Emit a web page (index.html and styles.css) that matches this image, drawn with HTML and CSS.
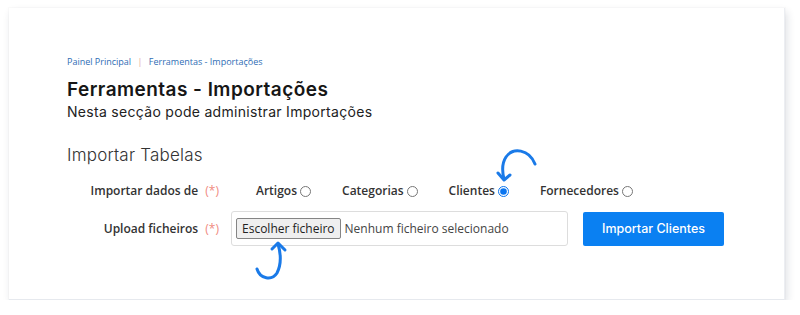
FILE: index.html
```html
<!DOCTYPE html>
<html lang="pt">
<head>
    <meta charset="UTF-8">
    <meta name="viewport" content="width=device-width, initial-scale=1.0">
    <title>Ferramentas - Importações</title>
    <link rel="stylesheet" href="styles.css">
</head>
<body>
    <div class="card">
        <!-- Breadcrumb -->
        <div class="breadcrumb">
            <a href="#">Painel Principal</a>
            <span class="sep">|</span>
            <a href="#">Ferramentas - Importações</a>
        </div>

        <h1>Ferramentas - Importações</h1>
        <p class="subtitle">Nesta secção pode administrar Importações</p>

        <h2>Importar Tabelas</h2>

        <div class="form-row">
            <label class="form-label">Importar dados de <span class="req">(*)</span></label>
            <div class="options">
                <label class="option">Artigos <input type="radio" name="tabela"></label>
                <label class="option">Categorias <input type="radio" name="tabela"></label>
                <label class="option">Clientes <input type="radio" name="tabela" checked></label>
                <label class="option">Fornecedores <input type="radio" name="tabela"></label>
            </div>
        </div>

        <div class="form-row">
            <label class="form-label">Upload ficheiros <span class="req">(*)</span></label>
            <div class="file-box">
                <button class="file-btn">Escolher ficheiro</button>
                <span class="file-name">Nenhum ficheiro selecionado</span>
            </div>
            <button class="btn-primary">Importar Clientes</button>
        </div>

        <!-- Annotation arrows -->
        <svg class="arrow arrow-radio" width="50" height="50" viewBox="0 0 50 50">
            <path d="M44 23 C38 8 22 6 15 16 C11 22 11 30 13 38" fill="none" stroke="#1a7ae8" stroke-width="3" stroke-linecap="round"/>
            <path d="M7 32 L13 39 L19 34" fill="none" stroke="#1a7ae8" stroke-width="3" stroke-linecap="round" stroke-linejoin="round"/>
        </svg>
        <svg class="arrow arrow-file" width="50" height="48" viewBox="0 0 50 48">
            <path d="M8 32 C11 42 23 44 28 36 C32 28 32 17 29 7" fill="none" stroke="#1a7ae8" stroke-width="3" stroke-linecap="round"/>
            <path d="M23 12 L29 6 L36 13" fill="none" stroke="#1a7ae8" stroke-width="3" stroke-linecap="round" stroke-linejoin="round"/>
        </svg>
    </div>
</body>
</html>
```

FILE: styles.css
```css
body {
    margin: 0;
    background: #fff;
    font-family: "Open Sans", Arial, sans-serif;
    color: #333;
}
.card {
    position: relative;
    margin: 8px 0 0 9px;
    width: 776px;
    height: 292px;
    box-sizing: border-box;
    padding: 47px 58px 0;
    background: #fff;
    border-right: 1px solid #eceef2;
    border-bottom: 1px solid #e6e9ee;
    box-shadow: 0 0 0 1px rgba(30, 45, 70, 0.02), 2px 4px 8px rgba(30, 45, 70, 0.14);
}
.breadcrumb {
    font-size: 9px;
    line-height: 14px;
}
.breadcrumb a {
    color: #2f6db5;
    text-decoration: none;
}
.breadcrumb .sep {
    color: #e3a3a3;
    margin: 0 4px;
}
h1 {
    margin: 9px 0 0;
    font-family: Inter, sans-serif;
    font-size: 19px;
    font-weight: 600;
    letter-spacing: 0.45px;
    line-height: 24px;
    color: #161616;
}
.subtitle {
    margin: 0;
    font-family: Inter, sans-serif;
    font-size: 14px;
    letter-spacing: 0.3px;
    line-height: 20px;
    color: #222;
}
h2 {
    margin: 21px 0 0;
    font-family: Inter, sans-serif;
    font-size: 17px;
    font-weight: 300;
    letter-spacing: 0.2px;
    line-height: 24px;
    color: #333;
}
.form-row {
    display: flex;
    align-items: center;
    margin-top: 15px;
}
.form-row + .form-row {
    margin-top: 12px;
}
.form-label {
    width: 152px;
    text-align: right;
    font-size: 12px;
    font-weight: 600;
    color: #333;
}
.req {
    color: #f08a80;
    font-weight: 400;
    margin-left: 4px;
}
.options {
    display: flex;
    gap: 31px;
    margin-left: 37px;
    font-size: 12px;
    font-weight: 600;
    color: #333;
}
.option {
    display: flex;
    align-items: center;
    gap: 3px;
}
.option input {
    width: 11px;
    height: 11px;
    margin: 2px 0 0;
    accent-color: #0a75f0;
}
.file-box {
    display: flex;
    align-items: center;
    margin-left: 12px;
    width: 337px;
    height: 35px;
    box-sizing: border-box;
    padding: 0 4px;
    border: 1px solid #ddd;
    border-radius: 3px;
    font-size: 12px;
}
.file-btn {
    font-family: "Open Sans", Arial, sans-serif;
    font-size: 12px;
    color: #222;
    padding: 1px 5px;
    background: #efefef;
    border: 1px solid #858585;
    border-radius: 2px;
}
.file-name {
    margin-left: 4px;
    color: #444;
}
.btn-primary {
    margin-left: 15px;
    width: 141px;
    height: 34px;
    background: #0a80f2;
    color: #fff;
    border: none;
    border-radius: 2px;
    font-family: Inter, sans-serif;
    font-size: 12.5px;
    font-weight: 500;
    cursor: pointer;
}
.arrow {
    position: absolute;
}
.arrow-radio {
    left: 482px;
    top: 133px;
}
.arrow-file {
    left: 240px;
    top: 229px;
}
```
